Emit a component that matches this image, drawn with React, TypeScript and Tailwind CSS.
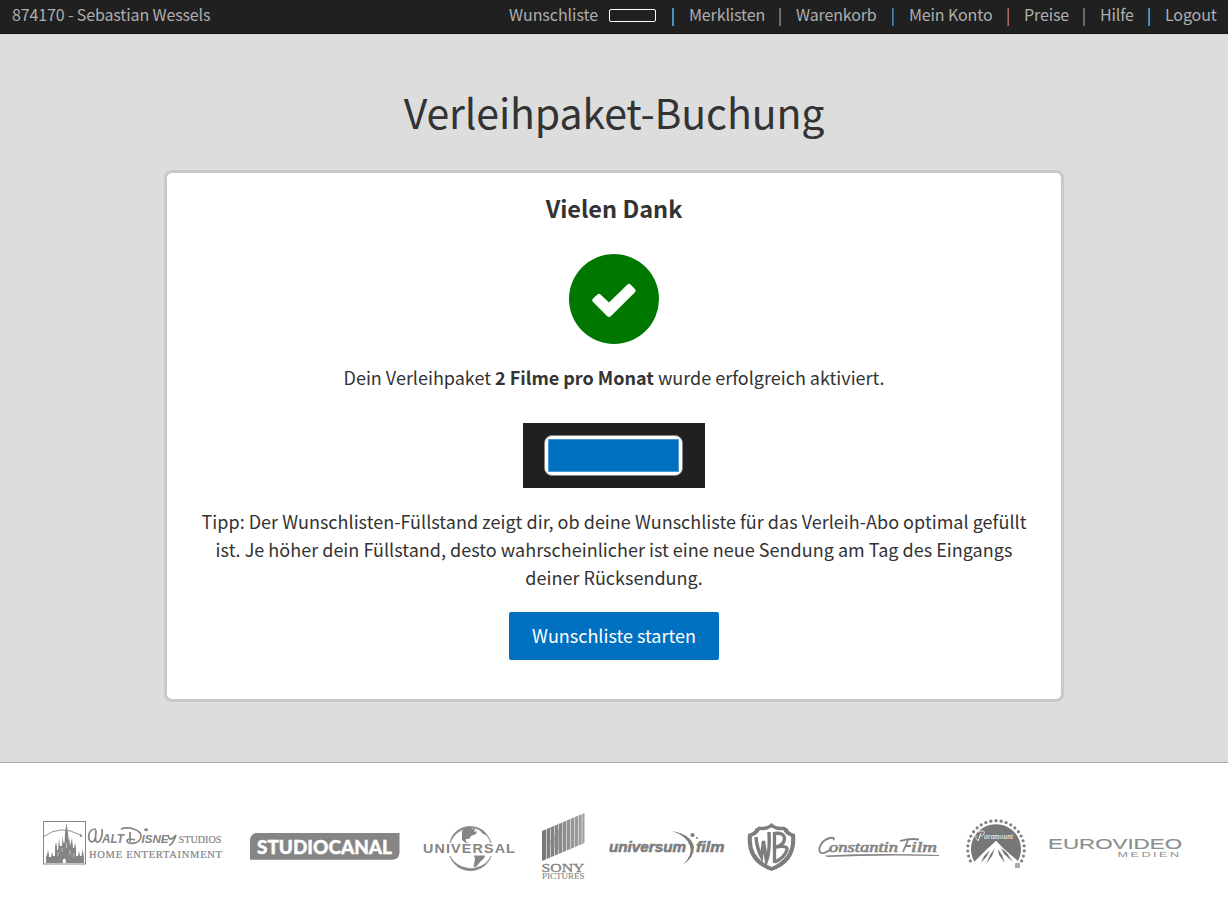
import React from "react";

interface NavItem {
  label: string;
  width: string;
  separator: string; // colours of the two-tone line in front of the item
}

const navItems: NavItem[] = [
  { label: "Merklisten", width: "w-[76px]", separator: "border-l-[#4f8fc0] border-r-[#8b8672]" },
  { label: "Warenkorb", width: "w-[82px]", separator: "border-l-[#75625a] border-r-[#6f7280]" },
  { label: "Mein Konto", width: "w-[84px]", separator: "border-l-[#3d80b0] border-r-[#6b5d48]" },
  { label: "Preise", width: "w-[45px]", separator: "border-l-[#5c4a78] border-r-[#a86a5c]" },
  { label: "Hilfe", width: "w-[34px]", separator: "border-l-[#8f5a2c] border-r-[#6a7078]" },
  { label: "Logout", width: "w-[52px]", separator: "border-l-[#3f83b5] border-r-[#8b8672]" },
];

const TopBar: React.FC = () => (
  <header className="flex h-[34px] justify-between border-b border-[#161216] bg-[#202020] pr-[11px] pl-[12px] text-[16px] leading-[29px] tracking-[-0.13px] text-[#aeaeae]">
    <div className="whitespace-nowrap">874170 - Sebastian Wessels</div>
    <nav className="flex whitespace-nowrap">
      <a className="w-[89px] tracking-[-0.05px]">Wunschliste</a>
      <span className="mt-[9px] ml-[11px] h-[13px] w-[47px] rounded-[2px] border border-white" />
      {navItems.map((item) => (
        <div key={item.label} className="flex">
          <span className={`mt-2 mr-[15px] h-[18px] w-[2px] border-x ${item.label === "Merklisten" ? "ml-[16px]" : "ml-[14px]"} ${item.separator}`} />
          <a className={item.width}>{item.label}</a>
        </div>
      ))}
    </nav>
  </header>
);

const SuccessIcon: React.FC = () => (
  <svg className="mx-auto mt-[24px] block" width="90" height="90" viewBox="0 0 90 90">
    <circle cx="45" cy="45" r="45" fill="#007800" />
    <path
      d="M28.5 40.5 Q30 39 31.5 40.5 L40 48.5 L58.5 30.5 Q60 29 61.5 30.5 L66 35 Q67.5 36.7 66 38.2 L42 62 Q40 64 38 62 L23.8 47.8 Q22.3 46.3 23.8 44.8 Z"
      fill="#fff"
    />
  </svg>
);

const FillLevel: React.FC = () => (
  <div className="mx-auto mt-[32px] flex h-[65px] w-[182px] justify-center bg-[#202020] pt-[12px] pr-px">
    <div className="h-[41px] w-[139px] rounded-[8px] border border-[#858585] bg-white p-[3px]">
      <div className="h-full w-full border border-[#4a99d6] bg-[#0070c0]" />
    </div>
  </div>
);

const DisneyLogo = () => (
  <svg width="200" height="75" viewBox="40 810 200 75" fill="#858585">
    <rect x="43.5" y="821.5" width="42" height="42.5" fill="none" stroke="#858585" />
    <path d="M44 836.5 Q60 824 80.5 835" fill="none" stroke="#858585" strokeWidth="0.9" />
    <path d="M80 833.5 l1 1.3 1.6 .2 -1.2 1 .2 1.6 -1.6-.8z" />
    <path d="M46 863 V857 L47 855 L48 850 L49 855 V857 H51 L52 852 L53 856 H55 V847 L56 842 L57 847 V850 H58 L59 839 L60 846 H62 L62.5 836 L63.5 843 L64.5 843 L65 833 L66.5 823 L68 833 L68.3 841 L69 836 L70 846 L71.5 840 L72 838 L73 848 H74 L75 843 L76 848 V856 H78 L79 851 L80 856 H81.5 L82.7 849 L84 857 V863Z" />
    <path d="M62.8 863 V860 Q64.3 857 65.8 860 V863Z" fill="#fff" />
    <path d="M58 852v4M62 848v4M70 850v5M74 853v4M66.5 843v5" stroke="#ddd" strokeWidth=".7" />
    {/* handwritten part of the word mark */}
    <path d="M96 829 C87 829 87 841 92 842 C96 842 96 832 96 830 C96 834 94 843 98 842 C101 841 103 834 102 829" fill="none" stroke="#858585" strokeWidth="1.7" />
    <text x="102" y="843" fontSize="12" fontWeight="bold" fontStyle="italic" fontFamily="Liberation Sans" textLength="22" lengthAdjust="spacingAndGlyphs">ALT</text>
    <path d="M121 829 C129 826 142 830 141 837 C140 844 127 845 127 841 C127 838 132 839 135 840 M130 832 V842" fill="none" stroke="#858585" strokeWidth="1.7" />
    <path d="M144.5 830.5 a2 1.4 0 1 1 .1 .1" />
    <text x="141.5" y="843" fontSize="11.5" fontWeight="bold" fontStyle="italic" fontFamily="Liberation Sans" textLength="27" lengthAdjust="spacingAndGlyphs">ISNE</text>
    <path d="M168 835 Q169 841 173 838 L176 835 Q173 844 169 845.5" fill="none" stroke="#858585" strokeWidth="1.7" />
    <g fontFamily="Liberation Serif" stroke="#858585" strokeWidth=".2">
      <text x="178.5" y="842.5" fontSize="10.5" textLength="43" lengthAdjust="spacingAndGlyphs">STUDIOS</text>
      <text x="89" y="857.8" fontSize="10.5" textLength="133">HOME ENTERTAINMENT</text>
    </g>
  </svg>
);

const StudiocanalLogo = () => (
  <svg width="170" height="75" viewBox="240 810 170 75">
    <path d="M256 833 H399.5 V853 Q399 859 393 859.8 H250 V839 Q251 834 256 833Z" fill="#858585" />
    <text x="257" y="853.5" fontSize="19.5" fontWeight="900" fontFamily="Lato" fill="#fff" stroke="#fff" strokeWidth=".4" textLength="135" lengthAdjust="spacingAndGlyphs">STUDIOCANAL</text>
  </svg>
);

const UniversalLogo = () => (
  <svg width="120" height="75" viewBox="410 810 120 75" fill="#858585">
    <path d="M450 843 C453 823 484 819 491 843 C484 823 458 823 450 843Z" stroke="#858585" strokeWidth=".6" />
    <path d="M450 856 C456 875 484 876 491 856 C484 872 459 873 450 856Z" stroke="#858585" strokeWidth=".6" />
    <path d="M462 831 Q466 826.5 473 827 L471 829 L475 829 L474 832 L477 831 L476 834 L471 836 L469 839 L466 839 L466 842 L469 843 L466 843 L462 840 Z" />
    <path d="M478 828 Q484 830 487 835 L483 834Z" />
    <path d="M474 855.5 L485 855.5 Q485 858 481 861 L476 867 L473.5 866.5 L475 859Z" />
    <text x="423" y="852.5" fontSize="12.5" fontWeight="bold" fontFamily="Liberation Sans" stroke="#fff" strokeWidth="1.2" paintOrder="stroke" textLength="93" lengthAdjust="spacingAndGlyphs" letterSpacing="1">UNIVERSAL</text>
  </svg>
);

const SonyLogo = () => (
  <svg width="70" height="75" viewBox="530 810 70 75" fill="#858585">
    <defs>
      <linearGradient id="sony" x1="0" x2="1">
        <stop offset="0" stopColor="#777" />
        <stop offset="1" stopColor="#a2a2a2" />
      </linearGradient>
    </defs>
    <path d="M542 831 L584.5 813 V843 L542 861Z" fill="url(#sony)" />
    <path d="M546.5 829v30M550.5 828v29M554.5 826v30M558.5 824v30M562.5 822v31M566.5 821v30M570.5 819v31M574.5 817v31M578.5 815v31M582 814v30" stroke="#ddd" strokeWidth=".8" />
    <path d="M548 843 L563 824 L559 842 L563 852Z" fill="#888" opacity=".5" />
    <text x="541.5" y="871.5" fontSize="11.5" fontFamily="Liberation Serif" stroke="#858585" strokeWidth=".3" textLength="43" lengthAdjust="spacingAndGlyphs">SONY</text>
    <text x="542" y="878.5" fontSize="7.5" fontFamily="Liberation Serif" stroke="#858585" strokeWidth=".1" textLength="42.5" lengthAdjust="spacingAndGlyphs">PICTURES</text>
  </svg>
);

const UniversumLogo = () => (
  <svg width="140" height="75" viewBox="600 810 140 75" fill="#7d7d7d">
    <g fontSize="15" fontWeight="bold" fontStyle="italic" fontFamily="Liberation Sans" stroke="#7d7d7d" strokeWidth=".6">
      <text x="609" y="852" textLength="77" lengthAdjust="spacingAndGlyphs">universum</text>
      <text x="696" y="852" textLength="28.5" lengthAdjust="spacingAndGlyphs">film</text>
    </g>
    <path d="M672 831 Q691 834 694 847 Q694 858 683 864.5 Q693 855 690 846 Q687 836 672 831Z" />
    <circle cx="692.5" cy="835" r="2.1" />
    <circle cx="697" cy="838" r="1" />
  </svg>
);

const WarnerLogo = () => (
  <svg width="65" height="75" viewBox="740 810 65 75">
    <path d="M771.5 823 Q777 828 784 826.5 L788 829 Q787.5 832 795 834 Q798 862 771.5 871 Q745 862 748 834 Q755.5 832 755 829 L759 826.5 Q766 828 771.5 823Z" fill="#7d7d7d" />
    <path d="M771.5 827.5 Q777 831 783 830 Q786 835 791 836.5 Q793 858 771.5 867 Q750 858 752 836.5 Q757 835 760 830 Q766 831 771.5 827.5Z" fill="#fff" />
    <path d="M756 837 Q757 849 761.5 857 L763.5 841 L766.5 861 Q770 852 769 832" fill="none" stroke="#7d7d7d" strokeWidth="3.4" />
    <path d="M774.5 832 V863 M774 833.5 Q784.5 832 784.5 839 Q784 845 776 847 Q788 845 787 850 Q784 858 775 862" fill="none" stroke="#7d7d7d" strokeWidth="3.3" />
  </svg>
);

const ConstantinLogo = () => (
  <svg width="145" height="75" viewBox="805 810 145 75" fill="#858585">
    <path d="M833 840 Q836 837 830 838 C821 840 817 850 821 853 Q825 854 831 849" fill="none" stroke="#858585" strokeWidth="1.8" />
    <text x="829" y="852" fontSize="15" fontStyle="italic" fontFamily="Liberation Serif" stroke="#858585" strokeWidth=".7" textLength="69" lengthAdjust="spacingAndGlyphs">onstantin</text>
    <path d="M900 841 Q910 838 919 839.5 M908 840 L903 852 M905 846 h6" fill="none" stroke="#858585" strokeWidth="1.8" />
    <text x="911" y="852" fontSize="15" fontStyle="italic" fontFamily="Liberation Serif" stroke="#858585" strokeWidth=".7" textLength="26" lengthAdjust="spacingAndGlyphs">ilm</text>
    <path d="M825 855.5 Q880 853 939 855 L939 856 Q880 854.5 827 857Z" />
  </svg>
);

const ParamountLogo = () => {
  const stars = Array.from({ length: 23 }, (_, i) => ((-205 + i * 10.45) * Math.PI) / 180);

  return (
    <svg width="85" height="75" viewBox="950 810 85 75">
      {stars.map((angle) => (
        <circle key={angle} cx={996 + 28.3 * Math.cos(angle)} cy={849 + 28.3 * Math.sin(angle)} r="1.6" fill="#808080" />
      ))}
      <path d="M974 861 A25 25 0 1 1 1018 861 L1016 863 L996 841 L976 864Z" fill="#777" />
      <path d="M996 841 L986 850 L974 862 L978 866 H1015 L1018 861 L1004 849Z" fill="#fff" />
      <path d="M990 850 L984 856 L981 863 L987 856Z M995 848 L990 855 L986 864 L992 856Z M998 849 L999 855 L1005 863 L1002 855Z M1001 848 L1004 854 L1013 862 L1007 853Z" fill="#777" />
      <path d="M976 835 Q975 840 979 840 M978 832 Q986 829 984 834 Q982 837 979 836 M981 833 L978 841" stroke="#fff" fill="none" strokeWidth=".8" />
      <text x="984" y="838.5" fontSize="8.5" fontStyle="italic" fontFamily="Liberation Serif" fill="#fff" textLength="29" lengthAdjust="spacingAndGlyphs">aramount</text>
      <rect x="1015.7" y="863.7" width="3.6" height="3.6" fill="#aaa" stroke="#858585" strokeWidth=".7" />
    </svg>
  );
};

const EurovideoLogo = () => (
  <svg width="193" height="75" viewBox="1035 810 193 75" fill="#8c8f8e" fontFamily="Liberation Sans">
    <text x="1048" y="848.5" fontSize="15.5" stroke="#8c8f8e" strokeWidth=".2" textLength="134" lengthAdjust="spacingAndGlyphs">EUROVIDEO</text>
    <text x="1117.5" y="857.3" fontSize="7.5" textLength="64" lengthAdjust="spacingAndGlyphs" letterSpacing="1.5">MEDIEN</text>
  </svg>
);

const App: React.FC = () => {
  return (
    <div className="h-[924px] overflow-hidden bg-white font-['Noto_Sans_CJK_SC',sans-serif] text-[#333]">
      <TopBar />
      <main className="h-[729px] border-b border-[#aaa] bg-[#ddd] pt-[47px]">
        <h1 className="text-center text-[41px] leading-[60px] tracking-[-0.12px]">Verleihpaket-Buchung</h1>
        <section className="mx-auto mt-[29px] h-[532px] w-[900px] rounded-[8px] border-3 border-[#c9c9c9] bg-white px-[30px] pt-[16px] text-center text-[18px] leading-[28px]">
          <h2 className="mb-[27px] text-[23.5px] leading-[38px] font-bold">Vielen Dank</h2>
          <SuccessIcon />
          <p className="mt-[19px]">
            Dein Verleihpaket <b className="font-bold">2 Filme pro Monat</b> wurde erfolgreich aktiviert.
          </p>
          <FillLevel />
          <p className="mt-[19px] tracking-[0.02px] whitespace-nowrap">
            Tipp: Der Wunschlisten-Füllstand zeigt dir, ob deine Wunschliste für das Verleih-Abo optimal gefüllt
            <br />
            ist. Je höher dein Füllstand, desto wahrscheinlicher ist eine neue Sendung am Tag des Eingangs
            <br />
            deiner Rücksendung.
          </p>
          <button className="mt-[21px] h-[48px] w-[210px] rounded-[2px] bg-[#0070c0] pb-[2px] text-white">Wunschliste starten</button>
        </section>
      </main>
      <footer className="flex pt-[47px] pl-[40px]">
        <DisneyLogo />
        <StudiocanalLogo />
        <UniversalLogo />
        <SonyLogo />
        <UniversumLogo />
        <WarnerLogo />
        <ConstantinLogo />
        <ParamountLogo />
        <EurovideoLogo />
      </footer>
    </div>
  );
};

export default App;
